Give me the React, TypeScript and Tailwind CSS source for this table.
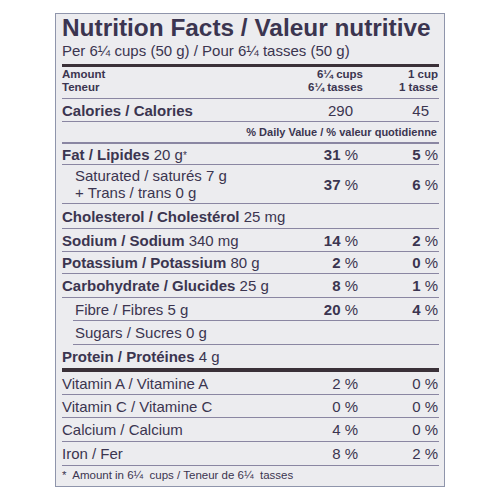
import React from 'react'

interface RowProps {
  className: string
  label: React.ReactNode
  c2?: React.ReactNode
  c3?: React.ReactNode
  indent?: boolean
  calories?: boolean
}

function Pct({ n, bold }: { n: string; bold?: boolean }) {
  return (
    <span>
      {bold ? <span className="font-bold">{n}</span> : n} %
    </span>
  )
}

function Row({ className, label, c2, c3, indent, calories }: RowProps) {
  const pad = calories ? 'pr-[10px]' : 'pr-[5px]'
  const pad3 = calories ? 'pr-[10px]' : 'pr-[1px]'
  return (
    <div className={`flex items-center border-[#8a86a2] text-[15px] leading-[17px] ${indent ? 'ml-[11px]' : ''} ${className}`}>
      <div className={`flex-1 min-w-0 whitespace-nowrap ${indent ? 'pl-[2px]' : ''}`}>{label}</div>
      <div className={`w-[100px] shrink-0 text-right whitespace-nowrap ${pad}`}>{c2}</div>
      <div className={`w-[76px] shrink-0 text-right whitespace-nowrap ${pad3}`}>{c3}</div>
    </div>
  )
}

export default function App() {
  return (
    <div className="w-[500px] h-[500px] bg-white overflow-hidden pt-[13px] font-['Liberation_Sans',Arial,sans-serif] text-[#3b3550]">
      <div className="ml-[55px] w-[390px] h-[474px] border border-[#8f95ab] bg-[#ececef] pl-[6px] pr-[5px] pt-[2px]">
        <h1 className="text-[24.4px] leading-[24px] font-bold whitespace-nowrap">Nutrition Facts / Valeur nutritive</h1>
        <div className="mt-[2px] text-[15px] leading-[17px] whitespace-nowrap">Per 6¼ cups (50 g) / Pour 6¼ tasses (50 g)</div>
        <div className="mt-[5px] h-[3px] bg-[#3a3038]"></div>

        <div className="flex items-start h-[32px] pt-[1px] border-b border-[#8a86a2] text-[11.5px] leading-[13px] font-bold">
          <div className="flex-1">
            <div>Amount</div>
            <div>Teneur</div>
          </div>
          <div className="w-[100px] shrink-0 text-right">
            <div>6¼ cups</div>
            <div>6¼ tasses</div>
          </div>
          <div className="w-[76px] shrink-0 text-right pr-[1px]">
            <div>1 cup</div>
            <div>1 tasse</div>
          </div>
        </div>

        <Row className="h-[23px] border-b" calories label={<b>Calories / Calories</b>} c2="290" c3="45" />

        <div className="flex items-center justify-end h-[22px] border-b-2 border-[#8a86a2] text-[11px] leading-[13px] font-bold pr-[2px] whitespace-nowrap">
          % Daily Value / % valeur quotidienne
        </div>

        <Row className="h-[21px] border-b" label={<span><b>Fat / Lipides</b> 20 g<sup className="text-[10px] relative -top-[1px]">*</sup></span>} c2={<Pct n="31" bold />} c3={<Pct n="5" bold />} />
        <Row
          className="h-[39px] border-b"
          label={
            <div className="pl-[13px]">
              <div>Saturated / saturés 7 g</div>
              <div>+ Trans / trans 0 g</div>
            </div>
          }
          c2={<Pct n="37" bold />}
          c3={<Pct n="6" bold />}
        />
        <Row className="h-[25px] border-b" label={<span><b>Cholesterol / Cholestérol</b> 25 mg</span>} />
        <Row className="h-[23px] border-b" label={<span><b>Sodium / Sodium</b> 340 mg</span>} c2={<Pct n="14" bold />} c3={<Pct n="2" bold />} />
        <Row className="h-[22px] border-b" label={<span><b>Potassium / Potassium</b> 80 g</span>} c2={<Pct n="2" bold />} c3={<Pct n="0" bold />} />
        <Row className="h-[24px] border-b" label={<span><b>Carbohydrate / Glucides</b> 25 g</span>} c2={<Pct n="8" bold />} c3={<Pct n="1" bold />} />
        <Row className="h-[23px] border-b" indent label="Fibre / Fibres 5 g" c2={<Pct n="20" bold />} c3={<Pct n="4" bold />} />
        <Row className="h-[24px] border-b" indent label="Sugars / Sucres 0 g" />
        <Row className="h-[27px] border-b-4 !border-[#3a3038]" label={<span><b>Protein / Protéines</b> 4 g</span>} />

        <Row className="h-[23px] border-b" label="Vitamin A / Vitamine A" c2={<Pct n="2" />} c3={<Pct n="0" />} />
        <Row className="h-[23px] border-b" label="Vitamin C / Vitamine C" c2={<Pct n="0" />} c3={<Pct n="0" />} />
        <Row className="h-[24px] border-b" label="Calcium / Calcium" c2={<Pct n="4" />} c3={<Pct n="0" />} />
        <Row className="h-[24px] border-b" label="Iron / Fer" c2={<Pct n="8" />} c3={<Pct n="2" />} />

        <div className="h-[19px] flex items-center text-[11.5px] leading-[13px] whitespace-pre">*  Amount in 6¼  cups / Teneur de 6¼  tasses</div>
      </div>
    </div>
  )
}
